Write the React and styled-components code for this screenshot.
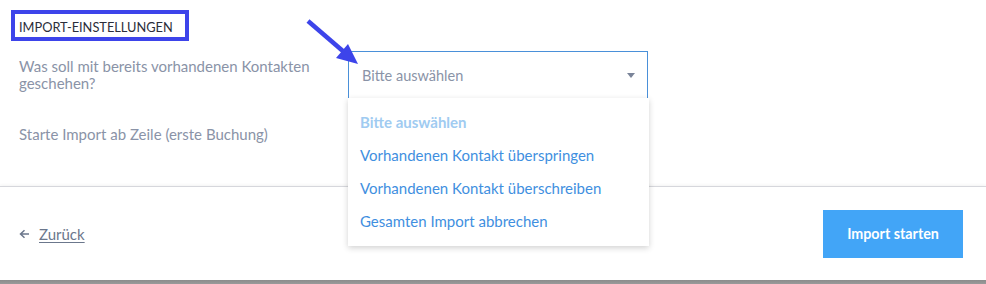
import React from 'react';
import styled, { createGlobalStyle } from 'styled-components';

const GlobalStyle = createGlobalStyle`
  html, body {
    margin: 0;
    padding: 0;
    background: #fff;
  }
  body {
    font-family: Lato, 'Open Sans', 'Liberation Sans', sans-serif;
    -webkit-font-smoothing: antialiased;
  }
`;

const Page = styled.div`
  position: relative;
  width: 986px;
  height: 284px;
  display: flex;
  flex-direction: column;
  overflow: hidden;
  background: #fff;
`;

const Settings = styled.section`
  position: relative;
  padding: 20px 20px 28px 19px;
`;

const Heading = styled.h3`
  position: relative;
  margin: 0 0 17px;
  font-size: 12.8px;
  line-height: 14px;
  font-weight: 400;
  letter-spacing: 0;
  text-transform: uppercase;
  color: #2b2d3a;
`;

const Highlight = styled.span`
  position: absolute;
  left: -8px;
  top: -10px;
  width: 178px;
  height: 31px;
  box-sizing: border-box;
  border: 4px solid #3d44ea;
`;

const Row = styled.div`
  display: grid;
  grid-template-columns: 329px 300px;
  align-items: center;
  min-height: 48px;
  margin-top: ${(p) => p.gap || 0}px;
`;

const Label = styled.label`
  max-width: 310px;
  font-size: 15px;
  line-height: 17px;
  color: #8a93a7;
`;

const SelectWrap = styled.div`
  position: relative;
`;

const SelectBox = styled.div`
  display: flex;
  align-items: center;
  justify-content: space-between;
  height: 48px;
  box-sizing: border-box;
  padding: 0 12px 0 13px;
  border: 1px solid #4a90d9;
  font-size: 14.5px;
  color: #8a93a7;
`;

const Caret = styled.span`
  width: 0;
  height: 0;
  border-left: 4.5px solid transparent;
  border-right: 4.5px solid transparent;
  border-top: 5px solid #7a8499;
  margin-top: 1px;
`;

const Menu = styled.ul`
  position: absolute;
  left: 0;
  top: 47px;
  z-index: 5;
  width: 301px;
  margin: 0;
  padding: 8px 0;
  list-style: none;
  background: #fff;
  box-shadow: 0 2px 6px rgba(0, 0, 0, 0.18);
`;

const Option = styled.li`
  padding: 8px 12px;
  font-size: 15px;
  line-height: 17px;
  font-weight: ${(p) => (p.placeholder ? 700 : 400)};
  color: ${(p) => (p.placeholder ? '#a0cbf1' : '#3f8fe0')};
`;

const Footer = styled.footer`
  flex: 1;
  display: flex;
  align-items: center;
  justify-content: space-between;
  padding: 0 23px 0 19px;
  border-top: 1px solid #d6d7dc;
  box-shadow: 0 -1px 3px rgba(0, 0, 0, 0.05);
`;

const Back = styled.a`
  display: flex;
  align-items: center;
  gap: 9px;
  margin-top: 1px;
  font-size: 15px;
  color: #6b778c;
  cursor: pointer;

  span {
    text-decoration: underline;
    text-underline-offset: 2px;
  }
`;

const Primary = styled.button`
  width: 140px;
  height: 48px;
  border: none;
  background: #42a5f7;
  color: #fff;
  font-family: inherit;
  font-size: 14.3px;
  font-weight: 700;
  cursor: pointer;
`;

const BottomEdge = styled.div`
  height: 4px;
  background: linear-gradient(#8c8c8c, #9a9a9a);
`;

const Pointer = styled.svg`
  position: absolute;
  left: 300px;
  top: 14px;
  pointer-events: none;
`;

const options = [
  'Vorhandenen Kontakt überspringen',
  'Vorhandenen Kontakt überschreiben',
  'Gesamten Import abbrechen',
];

const App = () => {
  return (
    <Page>
      <GlobalStyle />
      <Settings>
        <Heading>
          <Highlight />
          Import-Einstellungen
        </Heading>
        <Row>
          <Label>Was soll mit bereits vorhandenen Kontakten geschehen?</Label>
          <SelectWrap>
            <SelectBox>
              Bitte auswählen
              <Caret />
            </SelectBox>
            <Menu>
              <Option placeholder>Bitte auswählen</Option>
              {options.map((o) => (
                <Option key={o}>{o}</Option>
              ))}
            </Menu>
          </SelectWrap>
        </Row>
        <Row gap={11}>
          <Label>Starte Import ab Zeile (erste Buchung)</Label>
        </Row>
        <Pointer width="64" height="56" viewBox="0 0 64 56">
          <line x1="8" y1="7" x2="44" y2="38" stroke="#3d44ea" strokeWidth="4.5" />
          <polygon points="58,50 36,44 48,30" fill="#3d44ea" />
        </Pointer>
      </Settings>
      <Footer>
        <Back>
          <svg width="11" height="10" viewBox="0 0 11 10">
            <path d="M10 5H2M5.5 1.2L1.5 5l4 3.8" fill="none" stroke="#6b778c" strokeWidth="1.5" />
          </svg>
          <span>Zurück</span>
        </Back>
        <Primary>Import starten</Primary>
      </Footer>
      <BottomEdge />
    </Page>
  );
};

export default App;
